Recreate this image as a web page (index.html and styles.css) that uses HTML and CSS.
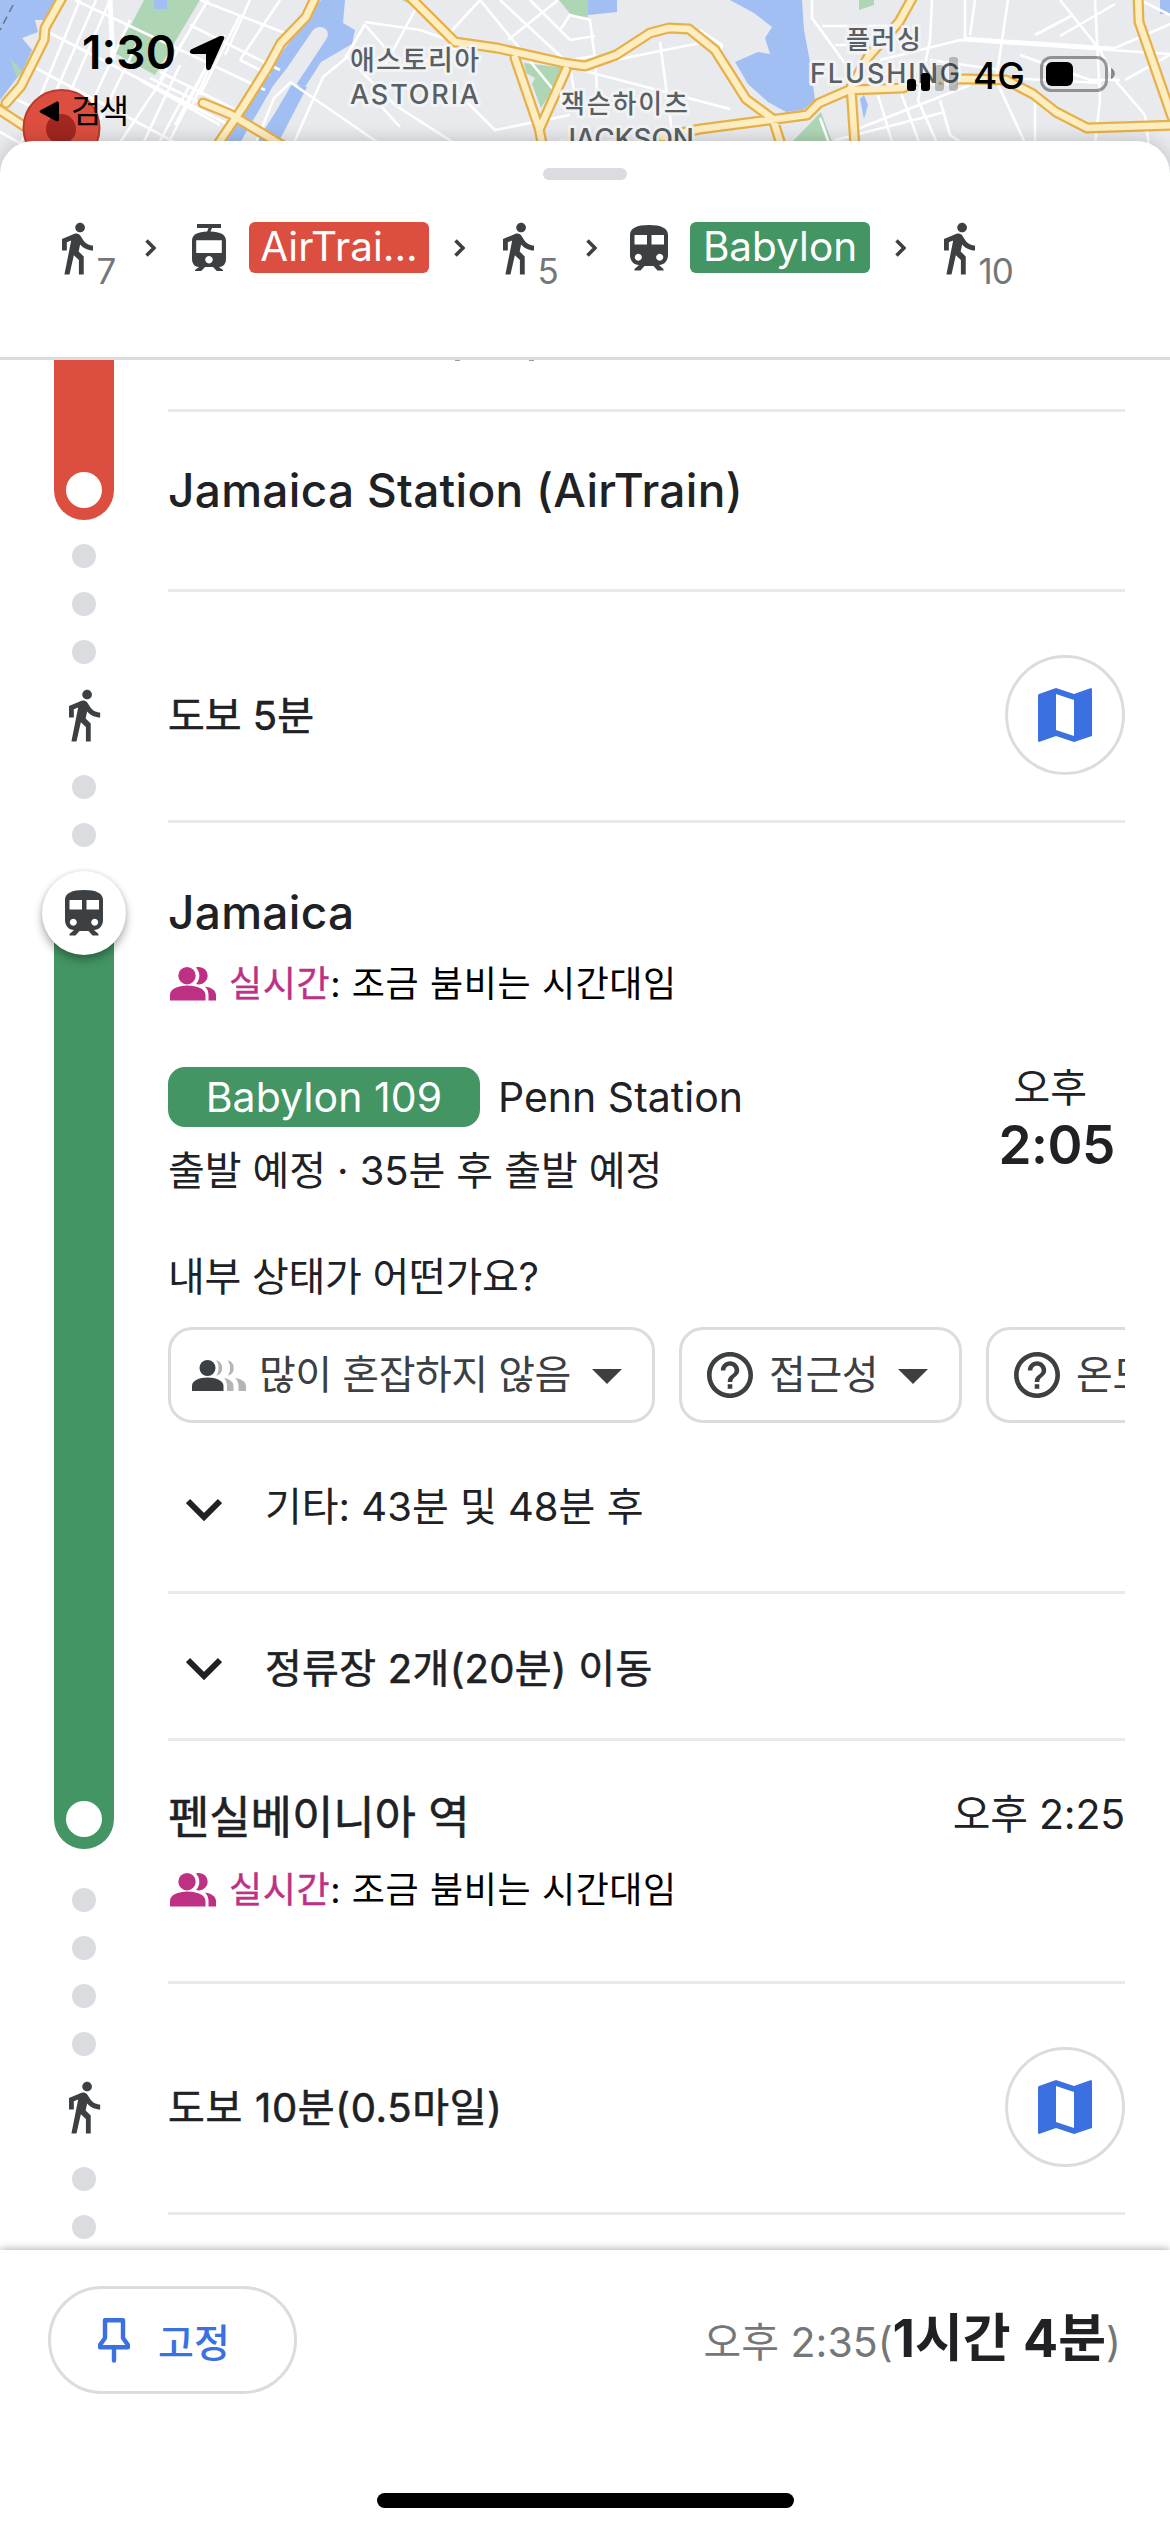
FILE: index.html
```html
<!DOCTYPE html>
<html lang="ko">
<head>
<meta charset="utf-8">
<title>대중교통 경로</title>
<link rel="stylesheet" href="styles.css">
</head>
<body>
<svg class="defs" width="0" height="0" aria-hidden="true">
  <symbol id="walk" viewBox="6 0 13 24"><path d="M13.5 5.5c1.1 0 2-.9 2-2s-.9-2-2-2-2 .9-2 2 .9 2 2 2zM9.8 8.9L7 23h2.1l1.8-8 2.1 2v6h2v-7.5l-2.1-2 .6-3C14.8 12 16.8 13 19 13v-2c-1.9 0-3.5-1-4.3-2.4l-1-1.6c-.4-.6-1-1-1.7-1-.3 0-.5.1-.8.1L6 8.3V13h2V9.6l1.8-.7"/></symbol>
  <symbol id="train" viewBox="0 0 38 46"><path fill-rule="evenodd" d="M0 10C0 3 7 0 19 0s19 3 19 10v20c0 6-4 10-9 10l4.500 4v1.500H27.500L23.500 41h-9l-4 4.500H4.500V44L9 40C4 40 0 36 0 30zM4.500 10v9.500H17V10zM21.500 10v9.500H34V10zM8.300 28.800a3.500 3.500 0 1 0 .01 0zM29.700 28.800a3.500 3.500 0 1 0 .01 0z"/></symbol>
  <symbol id="tram" viewBox="0 0 34 47"><path fill-rule="evenodd" d="M5 0h24v4h-9l-1.500 3.500C28 8 34 10 34 17v18c0 5-3 8-7 8l4 3v1.200H25L21 43h-8l-4 4.200H3V46l4-3c-4 0-7-3-7-8V17C0 10 6 8 15.200 7.500L16.500 4H5zM4.200 16.300V29h25.600V16.300zM17 32a3.700 3.700 0 1 0 .01 0z"/></symbol>
  <symbol id="next" viewBox="0 0 11 18"><path d="M1.500 1.500 9 9l-7.500 7.500" fill="none" stroke="#3c4043" stroke-width="3.600"/></symbol>
  <symbol id="down" viewBox="0 0 36 24"><path d="M2 3l16 16L34 3" fill="none" stroke="#202124" stroke-width="6"/></symbol>
  <symbol id="crowd" viewBox="0 0 46 34"><circle cx="17" cy="8.700" r="8.700"/><path d="M0 33.500v-5.500c0-6 8-9.500 17.500-9.500S35.500 22 35.500 28v5.500zM26 .4c1-.3 2-.4 3-.4a8.700 8.700 0 0 1 0 17.400c-1 0-2-.1-3-.4 4.500-5 4.500-11.600 0-16.600zM35 19.500c6.500 1 11 4 11 8.500v5.500h-7.500V28c0-3-1-6-3.500-8.500z"/></symbol>
  <symbol id="load" viewBox="0 0 54 31"><g fill="#b4b4b4"><path d="M24 .2a8 8 0 0 1 0 15.600c3.500-4 3.500-11.600 0-15.600zM35.500.2a8 8 0 0 1 0 15.600c3.500-4 3.500-11.600 0-15.600zM32 18c6 1 9.500 4 9.500 8v5H35v-5c0-3-1-6-3-8zM43 18c7 1 11 4 11 8v5h-7.500v-5c0-3-1-6-3.500-8z"/></g><circle cx="15.500" cy="8" r="8"/><path d="M0 31v-5c0-5.500 7-8.500 15.500-8.500S31.500 20.500 31.500 26v5z"/></symbol>
  <symbol id="help" viewBox="2 2 20 20"><path d="M11 18h2v-2h-2v2zm1-16C6.480 2 2 6.480 2 12s4.480 10 10 10 10-4.480 10-10S17.520 2 12 2zm0 18c-4.410 0-8-3.590-8-8s3.590-8 8-8 8 3.590 8 8-3.590 8-8 8zm0-14c-2.210 0-4 1.790-4 4h2c0-1.100.9-2 2-2s2 .9 2 2c0 2-3 1.750-3 5h2c0-2.250 3-2.500 3-5 0-2.210-1.790-4-4-4z"/></symbol>
  <symbol id="caret" viewBox="0 0 30 15"><path d="M0 0h30L15 15z"/></symbol>
  <symbol id="map" viewBox="0 0 54 54"><path fill-rule="evenodd" d="M1 6 18 0l18 6L53 0l1 1v47l-18 6-18-6-17 6-1-1V7zM18 6v36l18 6V12z"/></symbol>
  <symbol id="pin" viewBox="0 0 32 45"><path d="M7 2.200h18V20l5 7v2.200H2V27l5-7zM16 29v13.500" fill="none" stroke="#3b70e0" stroke-width="4.400" stroke-linejoin="round" stroke-linecap="round"/></symbol>
</svg>

<div class="screen">
  <div class="backdrop">
    <svg class="city" viewBox="0 0 1170 180">
      <rect width="1170" height="180" fill="#e8eaed"/>
      <g fill="#a2bff4">
        <path d="M0 0h64L52 20H35l3 12-16 6 10 12-9 20L0 100z"/>
        <path d="M321 0h24l-2 23 12 7-3 14-31 18-14 22-42 60h-40l18-30 42-66z"/>
        <path d="M730 0h72l2 30 6 32 5 38-12 10-17 2-18-10-20-18-13-22 23-10 12 2-5-16 7-11-18-14zM588 0h29v12l-29 3zM1160 0h10v14h-10zM864 95l4 10-4 14-4-20z"/>
      </g>
      <g fill="#e8eaed"><path d="M313 30c7-7 18-1 14 8l-68 103h-18l32-55 14-18z"/><path d="M292 82l12 5-38 58h-18z"/></g>
      <path fill="#a2bff4" d="M292 84l15 3-31 60h-23l22-34z"/>
      <g fill="#aed6b5">
        <path d="M144 0h56l-45 75-42-23 18-27z"/><path d="M559 0h29v17l-16-1zM524 63l42 5-25 40-9-24 3-6-9-5zM821 112l11 30h-40zM859 0h15v5l-15 5zM10 58l13 14-6 6zM402 0h8l4 6z"/>
      </g>
      <path fill="#a2bff4" d="M154 0h13v9h-13z"/>
      <path d="M13 5 0 30" stroke="#66728c" stroke-width="1.500" stroke-dasharray="8 5"/>
      <g fill="none" stroke="#fff" stroke-width="2.600">
        <path d="M80 0 18 150M96 0 30 150M130 20 70 150M138 42 85 150M110 0 45 150M165 75 115 150M180 65 140 150M190 85 155 150M205 70 165 150M215 50 175 125M225 35 190 110M240 15 200 95M208 0 160 80M250 0 225 55M280 0 240 60"/>
        <path d="M110 0l3 60" stroke-width="5"/>
        <path d="M75 0l190 90M50 33l185 95M30 65l150 80M190 25l90 45M240 60l30 15M150 78l85 42M160 72l80 40M140 80l80 45M0 132l25 14M10 96l20 10M200 0l90 35"/>
        <path d="M290 83l-16 15-18 45M365 22l55 8 35 12M365 24l-20 35-22 18-30 68M480 0l-35 38M480 0l90 110M415 10l-30 55M500 0l70 65 6 40M345 55l50 50 70 45M290 82l90 62M380 105l20 22M455 90l40 40 75-15M365 25l40 45 70-30M530 0l40 40M508 40l50-40M570 40l25-4M570 60l25-4 2 35M560 30l10-15 20 5 5 40M600 63l110-22M570 67l160 42M660 42l12 90M700 30l22 15-3 10"/>
        <path d="M812 0v18l35 48M822 26h80M880 60l80-20 210 14M932 0l-2 40-12 60 20 45M965 0v38l150 10M975 0l-5 35M1008 0l-12 80 30 65M1060 0l40 50 15 30 30 35 5 40M1115 48l60-26M1060 36l55-32M1035 35l38-20M1095 0l5 100-5 45M1035 92v50M850 45h-15M940 100l10 35 30 20M900 90l20 55M878 95l15 50M855 130l115-45M835 140l110-28M1020 55l70 25h30M1125 80l50-28M930 60l70 10M820 118l10 28M1140 0l30 15M1006 78l95 5"/>
      </g>
      <g fill="none" stroke-linejoin="round" stroke-linecap="round">
        <g stroke="#e6b04a" stroke-width="11">
          <path id="r" d="M63-4 45 28 44 40 21 86 6 103M-5 107l35 23M316-4l-10 21-25 26-13 24-25 40-27 40M203 103l27 11 55 33M515 58l24 70 4 20M566 70l-26 58M1138-5l1 27 33 95M662 137l38-8 69-9 38-5 12-12 30-13 54-2 15-9h50l38 1 27 14 23 18 31 16 88-3M914-5l-15 27-31 35-17 30 4 60M409-4l46 46 42 6 67 15 21 3 31-11 34-22 19-5 20 1 26 21 31 49 27 20 10 32"/>
        </g>
        <use href="#r" stroke="#fdedc0" stroke-width="6.500"/>
      </g>
      <circle cx="61.500" cy="128" r="38" fill="#dc4e3f" stroke="#ba3a2d" stroke-width="2"/><circle cx="61" cy="129" r="15" fill="#a12720"/>
      <g class="place">
        <text x="350" y="70" font-size="27" textLength="129">애스토리아</text>
        <text x="350" y="104" font-size="27" textLength="129">ASTORIA</text>
        <text x="561" y="113" font-size="26" textLength="127">잭슨하이츠</text>
        <text x="560" y="149" font-size="28" textLength="134">JACKSON</text>
        <text x="846" y="49" font-size="26" textLength="75">플러싱</text>
        <text x="810" y="83" font-size="27" textLength="150">FLUSHING</text>
      </g>
    </svg>
    <svg class="status" viewBox="0 0 1170 180">
      <text x="82" y="69" font-size="46" font-weight="600" textLength="94">1:30</text>
      <path d="M222 36c2 0 3 1 2 3l-13 29c-1 3-5 3-5-1V54h-13c-4 0-4-4-1-5l28-13z"/>
      <path d="M41 110l15-8c2-1 3 0 3 2v15c0 2-1 3-3 2l-15-8c-2-1-2-2 0-3z"/>
      <text x="71" y="123" font-size="33" font-weight="400" textLength="58">검색</text>
      <rect x="907" y="79" width="9" height="12" rx="3"/><rect x="921" y="73" width="9" height="18" rx="3"/>
      <g opacity=".22"><rect x="935" y="65" width="9" height="26" rx="3"/><rect x="949" y="57" width="9" height="34" rx="3"/></g>
      <text x="973" y="89" font-size="37" font-weight="500" textLength="52">4G</text>
      <rect x="1041.500" y="57.500" width="65" height="33" rx="10" fill="none" stroke="#000" stroke-opacity=".38" stroke-width="3"/>
      <rect x="1046" y="62" width="27" height="24" rx="6"/><path opacity=".45" d="M1111 68c5 2 5 10 0 11z"/>
    </svg>
  </div>

  <main class="sheet">
    <header class="summary">
      <div class="grabber"></div>
      <nav class="legs">
        <span class="leg"><svg class="walk"><use href="#walk"/></svg><small>7</small></span>
        <svg class="next to-tram"><use href="#next"/></svg>
        <svg class="tram"><use href="#tram"/></svg>
        <span class="line line-red">AirTrai...</span>
        <svg class="next to-walk"><use href="#next"/></svg>
        <span class="leg"><svg class="walk"><use href="#walk"/></svg><small>5</small></span>
        <svg class="next to-train"><use href="#next"/></svg>
        <svg class="train"><use href="#train"/></svg>
        <span class="line line-green">Babylon</span>
        <svg class="next to-walk"><use href="#next"/></svg>
        <span class="leg"><svg class="walk"><use href="#walk"/></svg><small>10</small></span>
      </nav>
    </header>

    <section class="route">
      <div class="rail">
        <div class="bar red"><i class="stop"></i></div>
        <div class="dots first"><i></i><i></i><i></i></div>
        <svg class="walk"><use href="#walk"/></svg>
        <div class="dots"><i></i><i></i></div>
        <div class="bar green"><span class="hub"><svg class="train"><use href="#train"/></svg></span><i class="stop"></i></div>
        <div class="dots second"><i></i><i></i><i></i><i></i></div>
        <svg class="walk"><use href="#walk"/></svg>
        <div class="dots"><i></i><i></i></div>
      </div>

      <div class="steps">
        <div class="step cut"><i></i><i></i></div>
        <div class="step arrive"><h2 class="latin">Jamaica Station (AirTrain)</h2></div>
        <div class="step foot"><p>도보 5분</p><button class="round"><svg><use href="#map"/></svg></button></div>
        <div class="step board">
          <h2 class="latin">Jamaica</h2>
          <p class="crowd"><svg><use href="#crowd"/></svg><span><b>실시간</b>: 조금 붐비는 시간대임</span></p>
          <div class="trip">
            <div class="trip-main">
              <div class="service"><span class="tag">Babylon 109</span><span class="headsign">Penn Station</span></div>
              <p>출발 예정 · 35분 후 출발 예정</p>
            </div>
            <div class="when"><span>오후</span><strong>2:05</strong></div>
          </div>
          <p class="ask">내부 상태가 어떤가요?</p>
          <div class="chips">
            <button class="chip c1"><svg class="load"><use href="#load"/></svg><span>많이 혼잡하지 않음</span><svg class="caret"><use href="#caret"/></svg></button>
            <button class="chip c2"><svg class="help"><use href="#help"/></svg><span>접근성</span><svg class="caret"><use href="#caret"/></svg></button>
            <button class="chip c2"><svg class="help"><use href="#help"/></svg><span>온도</span><svg class="caret"><use href="#caret"/></svg></button>
          </div>
          <div class="more"><svg><use href="#down"/></svg><span>기타: 43분 및 48분 후</span></div>
        </div>
        <div class="step ride"><svg><use href="#down"/></svg><span>정류장 2개(20분) 이동</span></div>
        <div class="step alight">
          <div class="alight-top"><h2 class="hangul">펜실베이니아 역</h2><time>오후 2:25</time></div>
          <p class="crowd"><svg><use href="#crowd"/></svg><span><b>실시간</b>: 조금 붐비는 시간대임</span></p>
        </div>
        <div class="step foot"><p class="long">도보 10분(0.5마일)</p><button class="round"><svg><use href="#map"/></svg></button></div>
      </div>
    </section>

    <footer class="dock">
      <div class="dock-row">
        <button class="pinbtn"><svg><use href="#pin"/></svg><span>고정</span></button>
        <p class="eta"><span>오후 2:35(</span><strong>1시간 4분</strong><span>)</span></p>
      </div>
      <div class="home"></div>
    </footer>
  </main>
</div>
</body>
</html>
```
FILE: styles.css
```css
* { box-sizing: border-box; }
body { margin: 0; background: #fff; font-family: Inter, "Noto Sans CJK KR", sans-serif; color: #202124; }
h2, p { margin: 0; font-weight: 400; white-space: nowrap; }
button { font: inherit; color: inherit; background: #fff; padding: 0; margin: 0; text-align: left; }
svg { display: block; flex: none; fill: #3c4043; }
.defs { position: absolute; }
.screen { position: relative; width: 1170px; height: 2532px; overflow: hidden; padding-top: 141px; }

/* map behind the sheet */
.backdrop { position: absolute; top: 0; left: 0; width: 1170px; height: 180px; }
.city, .status { position: absolute; top: 0; left: 0; width: 1170px; height: 180px; }
.status { fill: #000; }
.place { fill: #5a5f64; font-weight: 500; stroke: #f2f3f5; stroke-width: 6px; stroke-linejoin: round; paint-order: stroke; }

.sheet { position: relative; display: flex; flex-direction: column; height: 2391px; background: #fff; border-radius: 33px 33px 0 0; box-shadow: 0 0 18px rgba(0,0,0,.2); }
.summary { height: 219px; flex: none; border-bottom: 3px solid #dadce0; padding-top: 27px; }
.grabber { width: 84px; height: 12px; border-radius: 6px; background: #dadce0; margin: 0 auto; }
.legs { display: flex; align-items: center; height: 51px; margin-top: 42px; padding-left: 62px; }
.leg { display: flex; align-items: center; width: 83px; flex: none; gap: 3px; }
.leg small { font-size: 35px; line-height: 34px; color: #747779; margin-top: 46px; font-weight: 400; letter-spacing: -1px; }
.walk { width: 31.400px; height: 58px; }
.next { width: 11px; height: 18px; }
.to-tram { margin-right: 36px; }
.to-walk { margin: 0 38px 0 25px; }
.to-train { margin-right: 33px; }
.tram { width: 34px; height: 47px; margin-right: 23px; }
.train { width: 38px; height: 46px; }
.legs .train { margin-right: 22px; }
.line { width: 180px; height: 51px; flex: none; border-radius: 6px; text-align: center; color: #fff; font-size: 40.500px; line-height: 50px; }
.line-red { background: #dc4e3f; }
.line-green { background: #439564; }

.route { display: flex; height: 1890px; flex: none; overflow: hidden; }
.rail { width: 168px; flex: none; display: flex; flex-direction: column; align-items: center; }
/* rail graphics are centred on x = 84 */
.bar { width: 60px; flex: none; display: flex; flex-direction: column; justify-content: flex-end; align-items: center; border-radius: 0 0 30px 30px; padding-bottom: 12px; }
.bar.red { height: 160px; background: #dc4e3f; }
.bar.green { height: 936px; margin-top: 66px; background: #439564; justify-content: space-between; }
.stop { width: 36px; height: 36px; border-radius: 50%; background: #fff; }
.hub { display: flex; align-items: center; justify-content: center; width: 84px; height: 84px; margin-top: -42px; border-radius: 50%; background: #fff; box-shadow: 0 5px 10px rgba(0,0,0,.32), 0 0 4px rgba(0,0,0,.1); }
.dots { display: flex; flex-direction: column; gap: 24px; margin-top: 24px; }
.dots i { width: 24px; height: 24px; border-radius: 50%; background: #dadce0; }
.dots.second { margin-top: 39px; }
.rail .walk { margin: 22px 0 -7px 2px; }
.rail .walk + .dots { margin-top: 38px; }

.steps { width: 957px; flex: none; }
.step { border-bottom: 3px solid #e8eaed; }
.cut { height: 52px; display: flex; gap: 69px; padding-left: 287px; }
.cut i { width: 5px; height: 1px; background: #9a9ca0; }
.steps h2 { font-size: 46px; line-height: 60px; }
.latin { font-weight: 500; letter-spacing: .3px; }
/* regular hangul thickened slightly: lighter than the medium cut */
.hangul, .foot p, .ride { -webkit-text-stroke: .6px currentColor; }
.steps .hangul { font-size: 45px; letter-spacing: -.1px; }
.arrive { height: 180px; padding-top: 48px; }
.foot { height: 231px; padding-top: 63px; display: flex; justify-content: space-between; align-items: flex-start; }
.foot p { font-size: 40px; line-height: 122px; }
.foot .long { letter-spacing: .7px; }
.round { width: 120px; height: 120px; border: 3px solid #dadce0; border-radius: 50%; display: flex; align-items: center; justify-content: center; }
.round svg { width: 54px; height: 54px; fill: #3b70e0; }
.board { padding-top: 59px; height: 771px; }
.crowd { display: flex; align-items: center; gap: 13px; height: 48px; margin-top: 18px; font-size: 36px; line-height: 50px; letter-spacing: .6px; color: #000; padding-left: 2px; }
.crowd svg { width: 46px; height: 34px; fill: #bd3083; }
.crowd b { font-weight: 400; color: #bd3083; -webkit-text-stroke: .4px currentColor; }
.trip { display: flex; justify-content: space-between; margin-top: 58px; height: 130px; }
.service { display: flex; align-items: center; gap: 18px; }
.tag { width: 312px; height: 60px; border-radius: 17px; background: #439564; color: #fff; text-align: center; font-size: 41px; line-height: 60px; letter-spacing: .1px; }
.headsign { font-size: 41px; line-height: 62px; }
.trip-main p { font-size: 40px; line-height: 50px; margin-top: 18px; letter-spacing: -.1px; }
.when { display: flex; flex-direction: column; align-items: flex-end; padding-right: 10px; }
.when span { font-size: 40px; line-height: 44px; margin-right: 28px; }
.when strong { font-size: 53px; line-height: 60px; font-weight: 600; margin-top: 5px; letter-spacing: -.4px; }
.ask { font-size: 40px; line-height: 50px; margin-top: 56px; letter-spacing: -.3px; }
.chips { display: flex; gap: 24px; margin-top: 25px; overflow: hidden; height: 96px; }
.chip { flex: none; height: 96px; border: 3px solid #dadce0; border-radius: 24px; display: flex; align-items: center; font-size: 40px; line-height: 60px; color: #3c4043; white-space: nowrap; }
.c1 { width: 487px; padding-left: 21px; }
.c2 { width: 283px; padding-left: 25px; }
.chip span { flex: none; }
.load { width: 54px; height: 31px; }
.c1 span { width: 312px; margin: 0 21px 0 13px; letter-spacing: -.5px; }
.help { width: 46px; height: 46px; }
.c2 span { width: 106px; margin: 0 23px 0 16px; letter-spacing: -.4px; }
.caret { width: 30px; height: 15px; margin-top: 3px; }
.more, .ride { display: flex; align-items: center; gap: 43px; padding-left: 18px; font-size: 40px; white-space: nowrap; }
.more svg, .ride svg { width: 36px; height: 24px; margin-top: 6px; }
.more { height: 168px; line-height: 170px; }
.ride { height: 147px; padding-bottom: 1px; letter-spacing: .3px; }
.alight { height: 243px; padding-top: 47px; }
.alight-top { display: flex; justify-content: space-between; }
.alight time { font-size: 41px; line-height: 53px; letter-spacing: -.2px; }
.alight .crowd { margin-top: 18px; }

.dock { position: relative; flex: none; height: 282px; background: #fff; box-shadow: 0 -1px 8px rgba(0,0,0,.32); padding-top: 36px; }
.dock-row { display: flex; justify-content: space-between; padding: 0 49px 0 48px; height: 108px; align-items: center; }
.pinbtn { width: 249px; height: 108px; border: 3px solid #dadce0; border-radius: 54px; display: flex; align-items: center; gap: 28px; padding-left: 47px; color: #3b70e0; font-size: 39px; font-weight: 500; }
.pinbtn svg { width: 32px; height: 45px; }
.eta { display: flex; align-items: baseline; font-size: 41px; line-height: 60px; color: #747779; }
.eta strong { color: #202124; font-size: 52px; font-weight: 700; }
.home { width: 417px; height: 15px; border-radius: 8px; background: #000; margin: 99px auto 0; }
```
